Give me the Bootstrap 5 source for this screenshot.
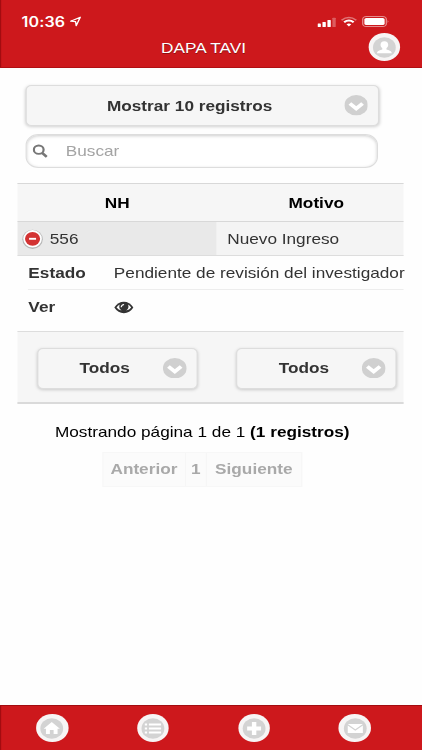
<!DOCTYPE html>
<html lang="es">
<head>
<meta charset="utf-8">
<meta name="viewport" content="width=device-width, initial-scale=1">
<title>DAPA TAVI</title>
<link href="https://cdn.jsdelivr.net/npm/bootstrap@5.3.0/dist/css/bootstrap.min.css" rel="stylesheet">
<style>
html,body{height:750px;overflow:hidden;background:#fefefe}
body{font-family:"Liberation Sans",Arial,sans-serif;font-size:14.8px;line-height:20px;color:#333}
/* whole screen is laid out narrow and widened horizontally */
.screen{width:363px;height:750px;transform:scaleX(1.163);transform-origin:0 0}
.topbar{height:68px;background:#cd181c;border-bottom:1px solid #b00f13;box-shadow:inset 1px 0 #a30c10;color:#fff;padding-left:18.6px;padding-right:18.6px}
.statusline{height:30px;padding-top:13px;padding-right:9px}
.clock{font:600 13.8px/18px Inter,sans-serif;letter-spacing:.1px}
.titleline{height:37px}
.apptitle{font-size:14.8px;line-height:20px;width:350px;margin-left:-18.6px;padding-top:8px;text-shadow:0 1px 0 #8c1013}
.ring{width:27.6px;height:28px;border-radius:50%;background:#f7f5f5;display:flex;align-items:center;justify-content:center}
.ring svg{width:21px;height:21px}
.avatar{margin-left:-33.5px;margin-top:3px}
.content{height:637px;padding:17px 15.2px 0}
.picker{height:41px;background:#f6f6f6;border:1px solid #ddd;border-radius:5px;box-shadow:0 1px 3px rgba(0,0,0,.18);font-weight:700;color:#333;text-shadow:0 1px 0 #f3f3f3;padding:0 8.5px}
.picker svg{width:20.6px;height:20.6px;flex:none}
.wide{width:303.5px;margin-left:7.2px}
.wide span{padding-right:1.5px}
.searchbox{height:34px;width:303px;margin:8px 0 0 7.2px;border:1px solid #ddd;border-radius:11px;box-shadow:inset 0 1px 3px rgba(0,0,0,.2);color:#a4a4a4;background:#fff;padding-left:5px}
.searchbox svg{width:13px;height:14px;margin-right:15.2px}
.grid{width:332.3px;margin-top:15px}
.headrow{height:39px;background:#f6f6f6;border-top:1px solid #d8d8d8;border-bottom:1px solid #d8d8d8;color:#000;font-weight:700}
.headrow>div:first-child,.datarow>div:first-child{width:171.2px}
.headrow>div+div{padding-left:10px}
.datarow{height:34px;background:#f4f4f4;border-bottom:1px solid #ddd}
.datarow>div:first-child{background:#e9e9e9;padding-left:3.6px}
.datarow>div+div{padding-left:9px}
.minus{width:18px;height:20px;margin-right:6px}
.detail{margin-left:9.2px;height:34px}
.detail b{width:73.5px;flex:none}
.line{border-bottom:1px solid #ededed}
.filters{height:73px;margin-top:7px;background:#f6f6f6;border-top:1px solid #ddd;border-bottom:2px solid #dadada;padding:2px 6.2px 0 16.4px}
.filters .picker{width:138.5px}
.filters .picker span{padding-right:1px}
.info{width:332px;margin-top:18px;color:#000;padding-right:14.600px}
.pager{height:35px;width:172px;margin:9.500px 0 0 72.6px;background:#fbfbfb;border:1px solid #f7f7f7;font-weight:700;color:#a9a9a9}
.pager span{padding:0 6.2px;line-height:33px}
.pager span+span{border-left:1px solid #f6f6f6;padding:0 4.500px}
.pager span:last-child{padding:0 7px}
.bottombar{height:45px;background:#cd181c;border-top:1px solid #a30c10;box-shadow:inset 1px 0 #a30c10;padding:0 44px 0 31px}
</style>
<script src="https://cdn.jsdelivr.net/npm/bootstrap@5.3.0/dist/js/bootstrap.bundle.min.js"></script>
</head>
<body>
<svg width="0" height="0" class="position-absolute"><symbol id="chev" viewBox="0 0 20 20"><circle cx="10" cy="10" r="9.9" fill="#d0d0d0"/><path d="M4.700 8.200 10 13.200l5.300-5" fill="none" stroke="#fff" stroke-width="3.300"/></symbol></svg>
<div class="screen">
<header class="topbar">
  <div class="statusline d-flex justify-content-between">
    <div class="d-flex align-items-center"><span class="clock">10:36</span>
      <svg class="ms-1" width="10" height="11" viewBox="0 0 10 11"><path d="M.8 5.2 9 1.2 5.5 9.7 5 5.7Z" fill="none" stroke="#fff" stroke-width="1.2" stroke-linejoin="round"/></svg></div>
    <div class="d-flex align-items-center">
      <svg width="16" height="10" viewBox="0 0 15 10" preserveAspectRatio="none" fill="#fff"><rect y="6.5" width="2.7" height="3.5" rx=".6"/><rect x="4" y="5" width="2.7" height="5" rx=".6"/><rect x="8" y="3" width="2.7" height="7" rx=".6"/><rect x="12" y=".7" width="2.7" height="9.3" rx=".6" opacity=".3"/></svg>
      <svg class="ms-1" width="14" height="11" viewBox="0 0 13 11" preserveAspectRatio="none" fill="none" stroke="#fff"><path d="M.6 4.2Q6.5-1.2 12.4 4.2" stroke-width="1.5" opacity=".4"/><path d="M2.700 6.200Q6.500 3 10.300 6.200" stroke-width="1.900"/><path d="M4.600 8.200Q6.500 6.600 8.400 8.200L6.500 10.400Z" fill="#fff" stroke="none"/></svg>
      <svg class="ms-1" width="24" height="11" viewBox="0 0 22 11" preserveAspectRatio="none"><rect x=".8" y=".5" width="18.600" height="10" rx="2.800" fill="none" stroke="#fff" opacity=".5"/><rect x="2.100" y="1.900" width="16" height="7.200" rx="1.600" fill="#fff"/><path d="M20.500 4q1.200 1.500 0 3Z" fill="#fff" opacity=".6"/></svg>
    </div>
  </div>
  <div class="titleline d-flex">
    <div class="apptitle text-center flex-shrink-0">DAPA TAVI</div>
    <div class="ring avatar flex-shrink-0"><svg viewBox="0 0 20 21"><ellipse cx="10" cy="10.500" rx="9.800" ry="10.200" fill="#d3d3d3"/><path d="M10 4.200c2.300 0 3.300 1.500 3.300 3.600 0 1.700-.6 2.700-1.500 3.500v1.200c1.800.8 4.200 1 4.600 3.700H3.600c.4-2.700 2.800-2.900 4.600-3.700v-1.200c-.9-.8-1.500-1.800-1.500-3.500 0-2.100 1-3.600 3.300-3.600Z" fill="#fff"/></svg></div>
  </div>
</header>
<main class="content">
  <div class="picker wide d-flex align-items-center"><span class="flex-fill text-center">Mostrar 10 registros</span><svg><use href="#chev"/></svg></div>
  <div class="searchbox d-flex align-items-center"><svg viewBox="0 0 13 14" fill="none" stroke="#777"><circle cx="5.300" cy="5.700" r="4.200" stroke-width="1.900"/><path d="m8.200 8.800 4 4" stroke-width="2.400"/></svg><span>Buscar</span></div>
  <div class="grid">
    <div class="headrow d-flex align-items-center text-center"><div>NH</div><div class="flex-fill">Motivo</div></div>
    <div class="datarow d-flex"><div class="d-flex align-items-center"><svg class="minus" viewBox="0 0 18 20"><ellipse cx="9" cy="10.300" rx="8.800" ry="9.600" fill="#b6b6b6"/><ellipse cx="9" cy="9.800" rx="8" ry="8.700" fill="#fff"/><ellipse cx="9" cy="9.800" rx="6.500" ry="6.900" fill="#d33333"/><path d="M6 9.800h6" stroke="#fff" stroke-width="1.900"/></svg>556</div><div class="d-flex align-items-center">Nuevo Ingreso</div></div>
    <div class="detail line d-flex align-items-center text-nowrap"><b>Estado</b><span>Pendiente de revisión del investigador</span></div>
    <div class="detail d-flex align-items-center"><b>Ver</b><svg width="17" height="13" viewBox="0 0 17 13"><path d="M.3 6.500Q3.500 .8 8.500 .8t8.200 5.700Q13.500 12.200 8.500 12.200T.3 6.500Z" fill="#333"/><path d="M2.200 6.500Q3.300 4.700 4.900 3.600q-1.200 3.800 1.600 6Q3.800 8.900 2.200 6.500ZM14.800 6.500Q13.700 4.700 12.100 3.600q1.200 3.800-1.600 6Q13.200 8.900 14.800 6.500Z" fill="#fefefe"/><path d="M6.200 6.300q.2-2.500 2.500-2.800" stroke="#fefefe" fill="none" stroke-width="1"/></svg></div>
    <div class="filters d-flex justify-content-between align-items-center">
      <div class="picker d-flex align-items-center"><span class="flex-fill text-center">Todos</span><svg><use href="#chev"/></svg></div>
      <div class="picker d-flex align-items-center"><span class="flex-fill text-center">Todos</span><svg><use href="#chev"/></svg></div>
    </div>
    <div class="info text-center text-nowrap">Mostrando página 1 de 1 <b>(1 registros)</b></div>
    <div class="pager d-flex"><span>Anterior</span><span>1</span><span>Siguiente</span></div>
  </div>
</main>
<footer class="bottombar d-flex justify-content-between align-items-center">
  <div class="ring"><svg viewBox="0 0 20 21"><ellipse cx="10" cy="10.500" rx="9.800" ry="10.200" fill="#d3d3d3"/><path d="m10 4 7 6.800h-2V16h-3.400v-4H8.400v4H5v-5.200H3Z" fill="#fff"/></svg></div>
  <div class="ring"><svg viewBox="0 0 20 21"><ellipse cx="10" cy="10.500" rx="9.800" ry="10.200" fill="#d3d3d3"/><path d="M3 6.500h2m1.500 0H17m-14 4h2m1.500 0H17m-14 4h2m1.500 0H17" stroke="#fff" stroke-width="2"/></svg></div>
  <div class="ring"><svg viewBox="0 0 20 21"><ellipse cx="10" cy="10.500" rx="9.800" ry="10.200" fill="#d3d3d3"/><path d="M10 4v13M4 10.500h12" stroke="#fff" stroke-width="3.800"/></svg></div>
  <div class="ring"><svg viewBox="0 0 20 21"><ellipse cx="10" cy="10.500" rx="9.800" ry="10.200" fill="#d3d3d3"/><path d="M3.500 6h13L10 11.200ZM3.500 7.500 10 12.700l6.500-5.200V15h-13Z" fill="#fff"/></svg></div>
</footer>
</div>
</body>
</html>
